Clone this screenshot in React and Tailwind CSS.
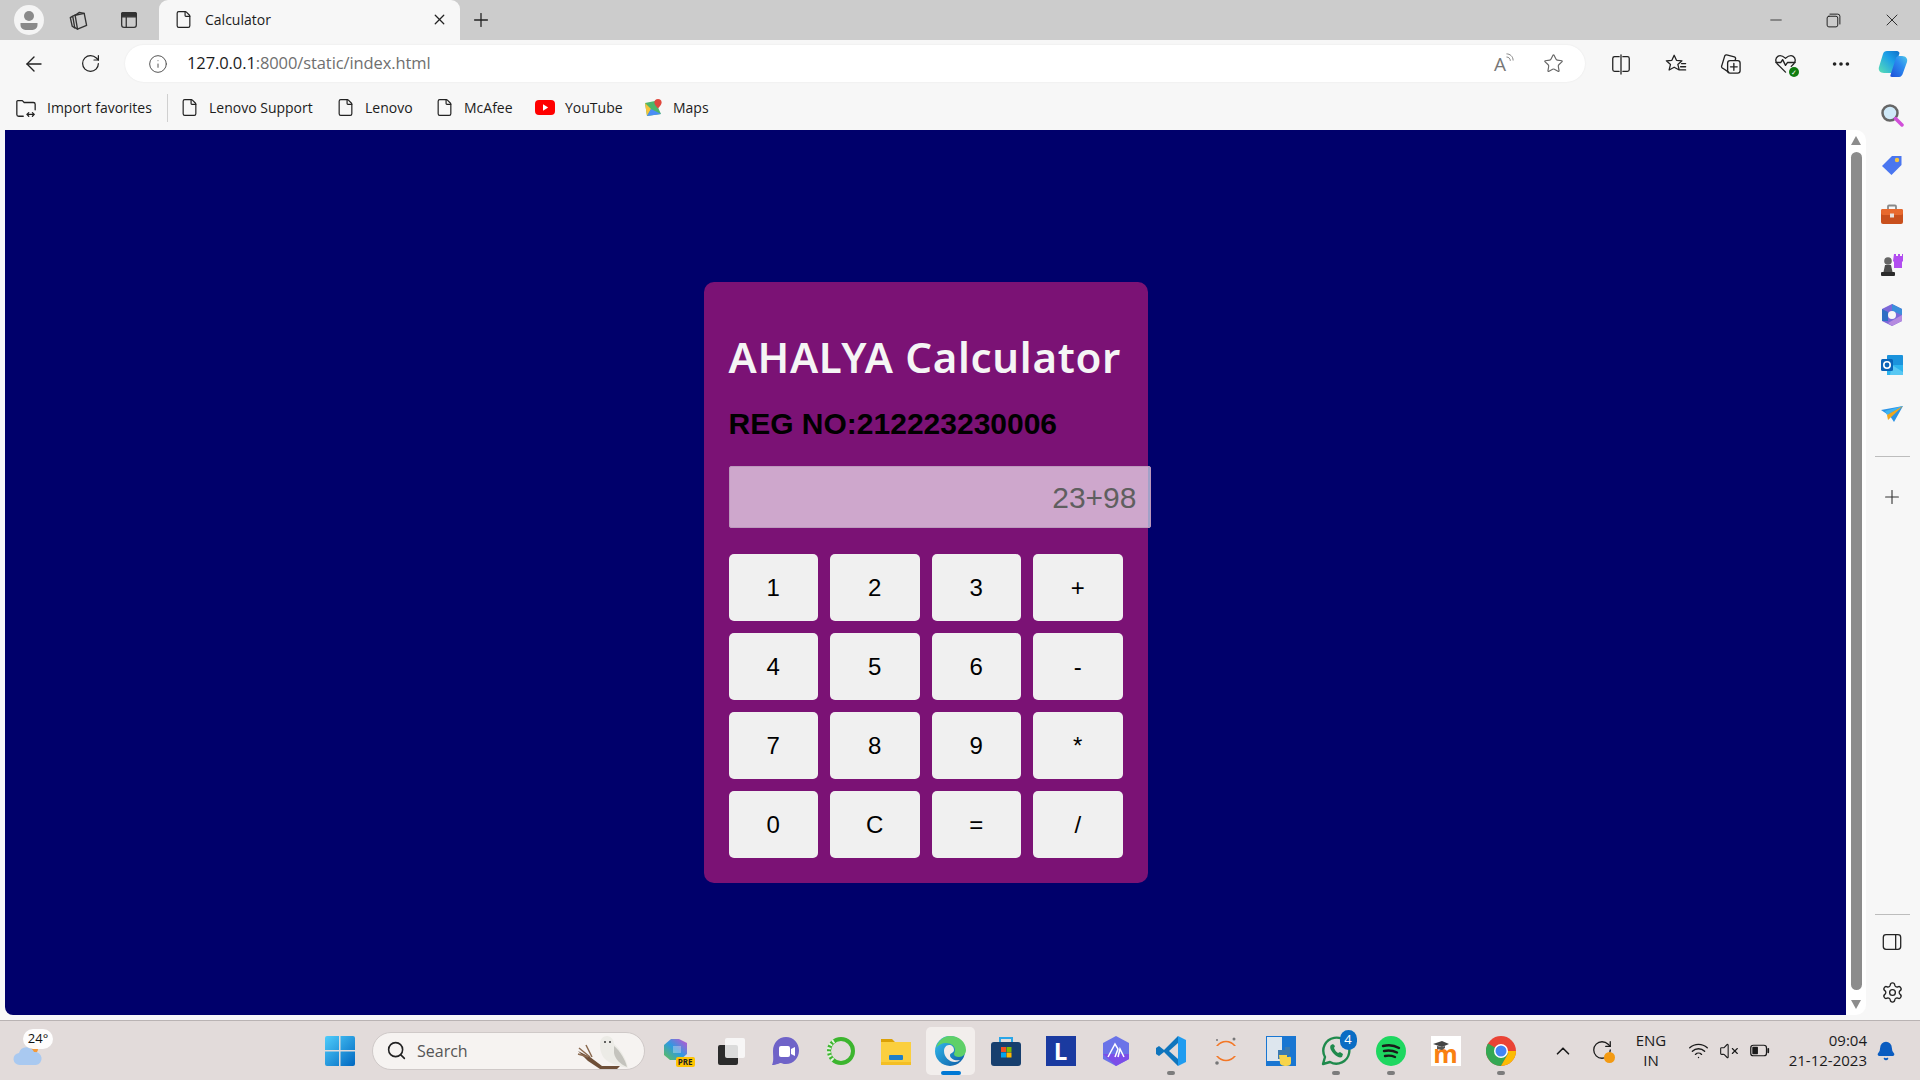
import React from 'react';
import {
  ArrowLeft, RotateCw, Info, File, Plus, X, Minus, Star, Settings, ChevronUp, Wifi,
  VolumeX, Bell, Search, MoreHorizontal,
} from 'lucide-react';

const keys = ['1', '2', '3', '+', '4', '5', '6', '-', '7', '8', '9', '*', '0', 'C', '=', '/'];

// ---- browser chrome glyphs ----
const Glyph = ({ children, size = 24, view = 24, className = '' }) => (
  <svg width={size} height={size} viewBox={`0 0 ${view} ${view}`} fill="none" stroke="currentColor" strokeWidth="1.4" strokeLinecap="round" strokeLinejoin="round" className={className}>
    {children}
  </svg>
);

const ToolButton = ({ children, width }) => (
  <div className={`flex items-center justify-center text-[#222] ${width}`}>{children}</div>
);

const Bookmark = ({ icon, label, className = '' }) => (
  <div className={`flex items-center gap-[10px] ${className}`}>
    {icon}
    <span className="text-[14px] whitespace-nowrap text-[#1c1c1c]">{label}</span>
  </div>
);

const DocIcon = () => <File size={19} strokeWidth={1.5} className="text-[#222]" />;

const YoutubeIcon = () => (
  <svg width="20" height="15" viewBox="0 0 20 15"><rect width="20" height="15" rx="4" fill="#f00" /><path d="M8 4.200 13.200 7.500 8 10.800z" fill="#fff" /></svg>
);

const MapsIcon = () => (
  <svg width="20" height="20" viewBox="0 0 20 20">
    <path d="M2 5 12 3 18 16 4 18z" fill="#4db56a" />
    <path d="M2 5 8 11 4 18z" fill="#f5c33b" />
    <path d="M8 11 18 16 4 18z" fill="#4a8df6" />
    <path d="M15 1a3.600 3.600 0 0 1 3.600 3.600C18.600 7 15 10.500 15 10.500S11.400 7 11.400 4.600A3.600 3.600 0 0 1 15 1z" fill="#e0483d" />
  </svg>
);

// ---- side panel icons ----
const sideIcons = [
  <svg key="s" width="24" height="24" viewBox="0 0 24 24"><circle cx="10" cy="10" r="7.500" fill="#cfe9f8" stroke="#666" strokeWidth="2.500" /><path d="M15.500 15.500 22 22" stroke="#d14fd9" strokeWidth="3.500" strokeLinecap="round" /></svg>,
  <svg key="t" width="22" height="22" viewBox="0 0 22 22"><path d="M1 12 11 2h9.500v9L10.500 21z" fill="#4a76f0" strokeLinejoin="round" /><circle cx="16" cy="6" r="2.200" fill="#f4c542" /></svg>,
  <svg key="b" width="24" height="22" viewBox="0 0 24 22"><rect x="8" y="1.500" width="8" height="5" rx="1" fill="none" stroke="#888" strokeWidth="1.800" /><rect x="1" y="5" width="22" height="15" rx="2" fill="#c9501d" /><rect x="1" y="5" width="22" height="6" rx="2" fill="#e8692d" /><rect x="10" y="9.500" width="4" height="4" fill="#e8e0dc" /></svg>,
  <svg key="c" width="24" height="24" viewBox="0 0 24 24"><path d="M14 1h2v2h2V1h2v2h2V1h1v7l-1 1v6h-8V9l-1-1z" fill="#b24df0" /><circle cx="8" cy="8" r="3.800" fill="#666" /><path d="M5 12h6l1.500 7h-9z" fill="#4c4c4c" /><rect x="1" y="19" width="14" height="4" rx="1" fill="#2b2b2b" /></svg>,
  <svg key="m" width="22" height="24" viewBox="0 0 22 24"><path d="M11 1 21 6v12l-10 5-10-5V6z" fill="#7c68d8" /><path d="M11 1 21 6v6l-10-4z" fill="#3b8edb" /><path d="M1 6l6 3v9l-6 0z" fill="#2f6fc4" /><path d="M21 12v6l-10 5-4-3z" fill="#b58ae0" /><circle cx="11" cy="12" r="4" fill="#f7f7f7" /></svg>,
  <svg key="o" width="22" height="22" viewBox="0 0 22 22"><rect x="6" y="1" width="16" height="20" rx="1" fill="#1b93dc" /><path d="M6 11h16v10H6z" fill="#2db4ee" /><path d="M11 11 22 18v3H9z" fill="#59c8f3" /><rect y="5" width="12" height="12" rx="1.500" fill="#0a64b8" /><circle cx="6" cy="11" r="3.200" fill="none" stroke="#fff" strokeWidth="1.600" /></svg>,
  <svg key="p" width="22" height="18" viewBox="0 0 22 18"><path d="M0 4 22 0 13 16 9 10z" fill="#2b93e6" /><path d="M4 5 22 0 6 9z" fill="#3fb5f2" /><path d="M6 9 22 0 7 14z" fill="#f0a81f" /></svg>,
];

// ---- taskbar icons ----
const tile = 'relative flex items-center justify-center w-[55px] h-[54px]';
const Running = ({ active }) => (
  <span className={`absolute bottom-[3px] left-1/2 -translate-x-1/2 h-[4px] rounded-full ${active ? 'w-[20px] bg-[#0078d4]' : 'w-[8px] bg-[#7c7c7c]'}`} />
);

const taskIcons = [
  { id: 'copilot', node: (
    <div className="relative w-[28px] h-[28px]">
      <svg width="28" height="28" viewBox="0 0 28 28">
        <defs><linearGradient id="cp" x1="0" y1="1" x2="1" y2="0"><stop offset="0" stopColor="#62c14f" /><stop offset=".5" stopColor="#2f9ae0" /><stop offset="1" stopColor="#c94fd0" /></linearGradient></defs>
        <path d="M9 2h8l8 4v11l-7 6H8L2 18V8z" fill="url(#cp)" />
        <path d="M11 9h8v7h-8z" fill="#f2f0f0" opacity=".35" />
      </svg>
      <span className="absolute right-[-5px] bottom-[-2px] rounded-[2px] bg-[#ffc400] px-[2px] text-[8px] leading-[10px] font-bold text-[#222]">PRE</span>
    </div>
  ) },
  { id: 'taskview', node: (
    <svg width="30" height="30" viewBox="0 0 30 30"><rect x="2" y="9" width="20" height="20" rx="2" fill="#2b2b2b" /><rect x="9" y="2" width="20" height="20" rx="2" fill="#fafafa" opacity=".85" /></svg>
  ) },
  { id: 'teams', node: (
    <svg width="30" height="30" viewBox="0 0 30 30"><path d="M15 1C7.500 1 2 7 2 15c0 5 1 10-1 14 5 0 7-2 9-2 2 1 4 1 5 1 7.500 0 13-6 13-13.500S22.500 1 15 1z" fill="#6f63c8" /><rect x="8" y="10" width="11" height="11" rx="2" fill="#fff" /><path d="M20 13l4-2v9l-4-2z" fill="#fff" /></svg>
  ) },
  { id: 'ring', node: (
    <svg width="30" height="30" viewBox="0 0 30 30" fill="none"><circle cx="15" cy="15" r="12" stroke="#3cb52e" strokeWidth="4" /><path d="M8 5 A12 12 0 0 0 8 25" stroke="#e4f2df" strokeWidth="4" strokeDasharray="2 2" /></svg>
  ) },
  { id: 'explorer', node: (
    <svg width="30" height="30" viewBox="0 0 30 30"><path d="M0 3h11l3 3h16v4H0z" fill="#dca106" /><rect y="6" width="30" height="23" fill="#fbcf3e" /><rect x="8" y="19" width="14" height="5" rx="1" fill="#1f7fc9" /><rect y="26" width="30" height="3" fill="#f4bf25" /></svg>
  ) },
  { id: 'edge', active: true, node: (
    <svg width="32" height="32" viewBox="0 0 32 32">
      <defs><linearGradient id="eg" x1="0" y1="0" x2="1" y2="1"><stop offset="0" stopColor="#35c1f1" /><stop offset="1" stopColor="#0c59a4" /></linearGradient></defs>
      <circle cx="15" cy="16" r="15" fill="url(#eg)" />
      <path d="M15 1c9 0 16 6 16 14 0 4-3 7-7 7-3 0-5-1-5-3 0-1 1-2 1-4 0-4-4-7-9-7-4 0-8 2-10 5C3 6 8 1 15 1z" fill="#5fd068" />
      <path d="M19 15c0-3-2-5-5-5-3 0-5 3-5 6 0 6 5 11 11 11 2 0 4-1 5-2-5 1-10-1-10-5 0-2 4-2 4-5z" fill="#f2ebe9" />
    </svg>
  ) },
  { id: 'store', node: (
    <svg width="30" height="30" viewBox="0 0 30 30"><path d="M9 7V2h12v5" fill="none" stroke="#29a6e8" strokeWidth="2" /><rect y="6" width="30" height="24" rx="3" fill="#173f6e" /><rect x="10" y="11" width="5" height="5" fill="#f25022" /><rect x="15.500" y="11" width="5" height="5" fill="#7fba00" /><rect x="10" y="16.500" width="5" height="5" fill="#00a4ef" /><rect x="15.500" y="16.500" width="5" height="5" fill="#ffb900" /></svg>
  ) },
  { id: 'lenovo', node: (
    <div className="flex items-center justify-center w-[30px] h-[30px] bg-[#1a3aa0] text-[24px] font-bold text-white">L</div>
  ) },
  { id: 'arc', node: (
    <svg width="28" height="30" viewBox="0 0 28 30"><path d="M14 0 27 7v16l-13 7-13-7V7z" fill="#6a73e8" /><path d="M1 18 14 30l13-7v-5z" fill="#7c4de8" /><path d="M6 21 13 8l3 5-3 8M16 21l2-8 4 8" fill="none" stroke="#fff" strokeWidth="1.500" /></svg>
  ) },
  { id: 'vscode', running: true, node: (
    <svg width="30" height="30" viewBox="0 0 30 30"><path d="M22 0 30 4v22l-8 4z" fill="#1f9cf0" /><path d="M22 0 8 14 3 10 0 12v6l3 2 5-4 14 14v-7L13 15l9-8z" fill="#0f75bd" /></svg>
  ) },
  { id: 'jupyter', node: (
    <svg width="30" height="30" viewBox="0 0 30 30" fill="none"><path d="M5 10C10 3 20 3 25 10z" fill="#f37726" /><path d="M5 20c5 7 15 7 20 0z" fill="#f37726" /><path d="M7 10c5-5 11-5 16 0zM7 20c5 5 11 5 16 0z" fill="#e3dbda" /><circle cx="23" cy="3" r="1.500" fill="#767677" /><circle cx="6" cy="4" r="1" fill="#767677" /><circle cx="6" cy="27" r="1.800" fill="#767677" /></svg>
  ) },
  { id: 'python', node: (
    <svg width="30" height="30" viewBox="0 0 30 30"><rect width="30" height="30" fill="#1976d2" /><rect x="1" y="1" width="15" height="24" fill="#dde6ee" /><path d="M12 14h7v-3h5v6c0 2-1 3-3 3h-5v3h-4z" fill="#3b7ab0" /><path d="M13 19h8v2c2 0 4-1 4 1v5c0 2-2 3-5 3s-6-1-6-3z" fill="#f7d44a" /></svg>
  ) },
  { id: 'whatsapp', running: true, badge: '4', node: (
    <svg width="30" height="30" viewBox="0 0 30 30" fill="none"><path d="M2 28l2-7A13 13 0 1 1 9 26z" stroke="#1f8a4c" strokeWidth="2.400" strokeLinejoin="round" /><path d="M10 9c-2 2 0 6 3 9s6 4 8 3l1-3-3-2-2 1c-2-1-3-3-4-5l1-2-2-2z" fill="#1f8a4c" /></svg>
  ) },
  { id: 'spotify', running: true, node: (
    <svg width="30" height="30" viewBox="0 0 30 30" fill="none"><circle cx="15" cy="15" r="15" fill="#1ed760" /><path d="M7 10c6-1.500 11-1 16 2M8 15c5-1 9-.5 13 1.500M9 20c4-.8 7-.4 10 1" stroke="#1a1a1a" strokeWidth="2.400" strokeLinecap="round" /></svg>
  ) },
  { id: 'moodle', node: (
    <div className="relative flex items-end justify-center w-[30px] h-[30px] bg-white">
      <span className="text-[25px] leading-[26px] font-bold text-[#f98012]">m</span>
      <svg className="absolute left-[2px] top-[5px]" width="16" height="9" viewBox="0 0 16 9"><path d="M0 3 9 0l7 3-7 3z" fill="#444" /><path d="M4 5v3l5 1 3-2V5L9 6z" fill="#555" /></svg>
    </div>
  ) },
  { id: 'chrome', running: true, node: (
    <svg width="30" height="30" viewBox="0 0 30 30"><circle cx="15" cy="15" r="15" fill="#ea4335" /><path d="M15 15 2 7.500A15 15 0 0 0 15 30l7.500-13z" fill="#34a853" /><path d="M15 15h15a15 15 0 0 1-15 15l7.500-13z" fill="#fbbc04" /><circle cx="15" cy="15" r="7" fill="#fff" /><circle cx="15" cy="15" r="5.500" fill="#4285f4" /></svg>
  ) },
];

const App = () => {
  return (
    <div className="flex h-screen w-[1920px] flex-col overflow-hidden bg-[#f7f7f7] font-['Open_Sans',sans-serif]">
      {/* tab strip */}
      <div className="flex h-[40px] items-center bg-[#cccccc]">
        <div className="flex w-[159px] items-center pl-[14px] text-[#333]">
          <div className="flex h-[30px] w-[30px] items-center justify-center rounded-full bg-[#f4f4f4]">
            <svg width="20" height="22" viewBox="0 0 20 22"><circle cx="10" cy="7" r="5" fill="#8a8a8a" /><path d="M1.500 14h17v2a5 5 0 0 1-5 5h-7a5 5 0 0 1-5-5z" fill="#8a8a8a" /></svg>
          </div>
          <Glyph size={23} className="ml-[22px]">
            <path d="M9.500 6.500 19 4.500 21.500 17 12 21z" />
            <path d="M9.500 6.500 7 7.500 9 19l3 2M7 7.500 4.500 9 6.500 18l3 2" />
            <path d="M9.500 6.500 14 3.500l5 1" />
          </Glyph>
          <Glyph size={22} className="ml-[29px]">
            <rect x="4" y="4" width="16" height="16" rx="2.500" /><path d="M4 8.500h16V5a1 1 0 0 0-1-1H5a1 1 0 0 0-1 1zM9 8.500V20" fill="currentColor" />
          </Glyph>
        </div>
        <div className="flex h-[40px] w-[301px] items-center rounded-t-[9px] bg-[#f7f7f7] pb-[1px] pl-[15px] pr-[12px]">
          <DocIcon />
          <span className="ml-[12px] flex-1 text-[14px] text-[#1c1c1c]">Calculator</span>
          <X size={17} strokeWidth={1.8} className="text-[#222]" />
        </div>
        <Plus size={22} strokeWidth={1.4} className="ml-[10px] text-[#222]" />
        <div className="ml-auto flex items-center text-[#222]">
          <ToolButton width="w-[58px]"><Minus size={18} strokeWidth={1.1} /></ToolButton>
          <ToolButton width="w-[58px] pr-[2px]">
            <Glyph size={17}><rect x="3" y="6" width="15" height="15" rx="2.500" /><path d="M7 3h11a3 3 0 0 1 3 3v11" /></Glyph>
          </ToolButton>
          <ToolButton width="w-[57px]"><X size={20} strokeWidth={1.1} /></ToolButton>
        </div>
      </div>

      {/* address bar */}
      <div className="flex h-[47px] items-center">
        <ToolButton width="w-[56px] pl-[12px]"><ArrowLeft size={24} strokeWidth={1.4} /></ToolButton>
        <ToolButton width="w-[56px] pl-[12px]"><RotateCw size={21} strokeWidth={1.4} /></ToolButton>
        <div className="ml-[13px] flex h-[37px] w-[1460px] items-center rounded-full bg-white pl-[23px] pr-[21px] shadow-[0_0_2px_rgba(0,0,0,0.08)]">
          <Info size={20} strokeWidth={1.2} className="text-[#555]" />
          <div className="ml-[19px] flex-1 text-[16.5px] tracking-[-0.1px]">
            <span className="text-[#1c1c1c]">127.0.0.1</span>
            <span className="text-[#6f6f6f]">:8000/static/index.html</span>
          </div>
          <div className="relative h-[24px] w-[24px] text-[#777]">
            <span className="absolute left-[1px] top-[-2px] text-[19px] leading-[28px]">A</span>
            <Glyph size={15} className="absolute right-[-3px] top-0"><path d="M3 3c5 0 10 4 10 10M3 8c3 0 5.500 2.500 5.500 5.500" /></Glyph>
          </div>
          <Star size={21} strokeWidth={1.3} className="ml-[26px] text-[#666]" />
        </div>
        <div className="ml-[8px] flex flex-1 items-center text-[#222]">
          <ToolButton width="w-[55px]">
            <Glyph size={22}><path d="M10 4H5a2 2 0 0 0-2 2v12a2 2 0 0 0 2 2h5M14 4h5a2 2 0 0 1 2 2v12a2 2 0 0 1-2 2h-5M12 2v21" /></Glyph>
          </ToolButton>
          <ToolButton width="w-[55px]">
            <Glyph size={22}><path d="M10 2.500 12.500 8l6 .5-4.500 4 1.500 6L10 15.500l-5.500 3 1.500-6-4.500-4 6-.5zM18 11.500h4.500M17 15h5.500M16 18.500h6.500" /></Glyph>
          </ToolButton>
          <ToolButton width="w-[55px]">
            <Glyph size={23}><path d="M10 21 4 17a2 2 0 0 1-1-3L6 4a2 2 0 0 1 2-1l8 2a2 2 0 0 1 1 3" /><rect x="9" y="9" width="13" height="13" rx="2.500" /><path d="M15.500 12v7M12 15.500h7" /></Glyph>
          </ToolButton>
          <ToolButton width="w-[55px]">
            <div className="relative">
              <Glyph size={23}><path d="M12 21 3.500 12.500C1 10 1.500 6 4 4.500s5-.5 8 2c3-2.500 5.500-3.500 8-2s3 5.500.5 8L18 15" /><path d="M2 11h5l2-3 3 6 2-3h8" /></Glyph>
              <span className="absolute right-[-2px] bottom-[-2px] flex h-[10px] w-[10px] items-center justify-center rounded-full bg-[#107c10] text-[7px] leading-none text-white">✓</span>
            </div>
          </ToolButton>
          <ToolButton width="w-[55px]"><MoreHorizontal size={22} strokeWidth={2} /></ToolButton>
          <ToolButton width="w-[50px]">
            <svg width="30" height="28" viewBox="0 0 30 28">
              <defs>
                <linearGradient id="copa" x1="0" y1="1" x2="1" y2="0"><stop offset="0" stopColor="#5ae0b4" /><stop offset=".6" stopColor="#1c9fe8" /><stop offset="1" stopColor="#0f6fc8" /></linearGradient>
                <linearGradient id="copb" x1="0" y1="1" x2="1" y2="0"><stop offset="0" stopColor="#1c4fd8" /><stop offset=".6" stopColor="#2c8cf0" /><stop offset="1" stopColor="#4fc8e8" /></linearGradient>
              </defs>
              <path d="M9 1h10c1.500 0 2 1 2.500 2L16 21c-.5 1.500-2 2-3 2H6c-4 0-6-3-5-6L5 4c.5-2 2-3 4-3z" fill="url(#copa)" />
              <path d="M14 27c-1.500 0-2-1-1.500-2L18 8c.5-1.500 2-2 3-2h3c4 0 6 3 5 6l-4 11c-.5 2-2 4-4 4z" fill="url(#copb)" />
            </svg>
          </ToolButton>
        </div>
      </div>

      <div className="flex min-h-0 flex-1">
        {/* bookmarks + page */}
        <div className="flex w-[1866px] flex-col">
          <div className="flex h-[43px] items-center pb-[2px] pl-[15px]">
            <Bookmark
              className="w-[152px]"
              icon={
                <Glyph size={22} className="text-[#222]"><path d="M9 21H4a2 2 0 0 1-2-2V5a1 1 0 0 1 1-1h5l2 2h10a2 2 0 0 1 2 2v6" /><path d="M13 19h8M13 19l2-2M13 19l2 2M21 19l-2-2M21 19l-2 2" /></Glyph>
              }
              label="Import favorites"
            />
            <div className="mr-[12px] h-[28px] w-px bg-[#d0d0d0]" />
            <Bookmark className="w-[156px]" icon={<DocIcon />} label="Lenovo Support" />
            <Bookmark className="w-[99px]" icon={<DocIcon />} label="Lenovo" />
            <Bookmark className="w-[100px]" icon={<DocIcon />} label="McAfee" />
            <Bookmark className="w-[108px]" icon={<YoutubeIcon />} label="YouTube" />
            <Bookmark icon={<MapsIcon />} label="Maps" />
          </div>

          <div className="flex h-[885px] pl-[5px]">
            <div className="flex flex-1 justify-center rounded-bl-[8px] bg-[#00006b] pt-[152px]">
              <div className="h-[601px] w-[444px] rounded-[10px] bg-[#7b1275] px-[25px] pt-[47px] font-['Liberation_Sans',sans-serif]">
                <h1 className="font-['Noto_Sans',sans-serif] text-[42px] leading-[56px] font-semibold tracking-[0.7px] whitespace-nowrap text-[#f5f5f5]">AHALYA Calculator</h1>
                <h2 className="mt-[21px] text-[30px] leading-[36px] font-bold whitespace-nowrap text-black">REG NO:212223230006</h2>
                <div className="mt-[24px] flex h-[62px] w-[422px] items-center justify-end rounded-[2px] border border-[#bc98bc] bg-white/[0.63] pr-[13px] text-[30px] text-[#5f5f5f]">23+98</div>
                <div className="mt-[26px] grid w-[394px] grid-cols-4 gap-x-[12px] gap-y-[12px]">
                  {keys.map((k) => (
                    <button key={k} className="h-[67px] rounded-[5px] bg-[#f0f0f0] text-[24px] text-black">{k}</button>
                  ))}
                </div>
              </div>
            </div>
            <div className="flex w-[20px] flex-col items-center rounded-r-[10px] bg-white px-[4px] py-[6px]">
              <div className="h-0 w-0 border-x-[5.5px] border-b-[9px] border-x-transparent border-b-[#8c8c8c]" />
              <div className="mt-[7px] mb-[10px] w-[11px] flex-1 rounded-full bg-[#8c8c8c]" />
              <div className="h-0 w-0 border-x-[5.5px] border-t-[9px] border-x-transparent border-t-[#8c8c8c]" />
            </div>
          </div>
        </div>

        {/* edge sidebar */}
        <div className="flex w-[54px] flex-col items-center pt-[3px] pr-[2px]">
          {sideIcons.map((icon, i) => (
            <div key={i} className="flex h-[50px] items-center justify-center">{icon}</div>
          ))}
          <div className="mt-[16px] h-px w-[35px] bg-[#bdbdbd]" />
          <Plus size={22} strokeWidth={1.2} className="mt-[29px] text-[#333]" />
          <div className="mt-auto h-px w-[35px] bg-[#bdbdbd]" />
          <Glyph size={22} className="mt-[16px] text-[#222]"><rect x="2.500" y="4" width="19" height="16" rx="3" /><path d="M16 4v16" /></Glyph>
          <Settings size={23} strokeWidth={1.4} className="mt-[28px] mb-[16px] text-[#222]" />
        </div>
      </div>

      {/* taskbar */}
      <div className="flex h-[60px] items-center border-t border-[#b9b3b3] bg-[#e2dbda]">
        <div className="relative mb-[7px] ml-[10px] h-[44px] w-[36px] self-end">
          <span className="absolute left-[13px] top-0 z-10 flex h-[20px] w-[30px] items-center justify-center rounded-full bg-white/95 text-[13px] text-[#111]">24°</span>
          <svg className="absolute bottom-[7px] left-[3px]" width="30" height="24" viewBox="0 0 30 24">
            <circle cx="20" cy="7" r="5" fill="#f39a3a" />
            <path d="M7 23a6 6 0 0 1-1-12 8 8 0 0 1 15-1 6.500 6.500 0 0 1 2 13z" fill="#a9c9f0" />
          </svg>
        </div>
        <svg className="ml-[279px]" width="30" height="30" viewBox="0 0 30 30">
          <defs><linearGradient id="win" x1="0" y1="0" x2="1" y2="1"><stop offset="0" stopColor="#4fcdfb" /><stop offset="1" stopColor="#0067c0" /></linearGradient></defs>
          <path d="M0 2a2 2 0 0 1 2-2h12v14H0zM15.500 0H28a2 2 0 0 1 2 2v12H15.500zM0 15.500h14V30H2a2 2 0 0 1-2-2zM15.500 15.500H30V28a2 2 0 0 1-2 2H15.500z" fill="url(#win)" />
        </svg>
        <div className="relative ml-[17px] flex h-[38px] w-[273px] items-center rounded-full border border-[#cfc9c8] bg-[#f6f3f1] pl-[13px]">
          <Search size={21} strokeWidth={1.8} className="text-[#222]" />
          <span className="ml-[10px] text-[16px] text-[#555]">Search</span>
          <svg className="absolute right-[8px] top-[1px]" width="60" height="36" viewBox="0 0 60 36">
            <path d="M2 17 14 23l12 9 18 0-3 3H24L12 27z" fill="#6e4f38" />
            <path d="M3 14l11 9M10 11l6 12M2 20l10 3" stroke="#8b6a50" strokeWidth="1.500" fill="none" />
            <path d="M24 10c0-5 3-8 7-8s7 4 7 8c6 5 12 13 14 24-9-2-18-4-23-9-4-4-5-10-5-15z" fill="#ecebe6" />
            <path d="M38 12c6 5 11 13 13 21-7-3-12-8-13-14z" fill="#c4c3bd" />
            <circle cx="29" cy="8" r="1" fill="#333" /><circle cx="34" cy="8" r="1" fill="#333" />
          </svg>
        </div>
        <div className="ml-[3px] flex h-[54px] items-center">
          {taskIcons.map((t) => (
            <div key={t.id} className={tile}>
              {t.active && <div className="absolute inset-x-[3px] top-[3px] bottom-[3px] rounded-[5px] bg-[#f2eeec]" />}
              <div className="relative flex items-center justify-center">
                {t.node}
                {t.badge && (
                  <span className="absolute right-[-6px] top-[-6px] flex h-[20px] w-[17px] items-center justify-center rounded-full bg-[#0a6cc4] text-[13px] text-white">{t.badge}</span>
                )}
              </div>
              {(t.running || t.active) && <Running active={t.active} />}
            </div>
          ))}
        </div>
        <div className="ml-[24px] flex items-center text-[#1a1a1a]">
          <ChevronUp size={22} strokeWidth={1.8} />
          <div className="relative ml-[17px] h-[24px] w-[24px]">
            <RotateCw size={22} strokeWidth={1.4} />
            <span className="absolute right-0 bottom-0 h-[11px] w-[11px] rounded-full bg-[#f39a12]" />
          </div>
          <div className="ml-[19px] w-[34px] pb-[2px] text-center text-[15px] leading-[20px]">ENG<br />IN</div>
          <Wifi size={21} strokeWidth={1.6} className="ml-[20px]" />
          <VolumeX size={20} strokeWidth={1.3} className="ml-[10px]" />
          <Glyph size={21} className="ml-[10px]"><rect x="2" y="6" width="18" height="12" rx="3" /><rect x="4.500" y="8.500" width="5" height="7" fill="currentColor" /><path d="M22 10v4" strokeWidth="2" /></Glyph>
          <div className="ml-[13px] w-[84px] pb-[2px] text-right text-[15px] leading-[20px]">09:04<br />21-12-2023</div>
          <Bell size={20} strokeWidth={2} fill="#0a5cc0" className="ml-[9px] text-[#0a5cc0]" />
        </div>
      </div>
    </div>
  );
};

export default App;
